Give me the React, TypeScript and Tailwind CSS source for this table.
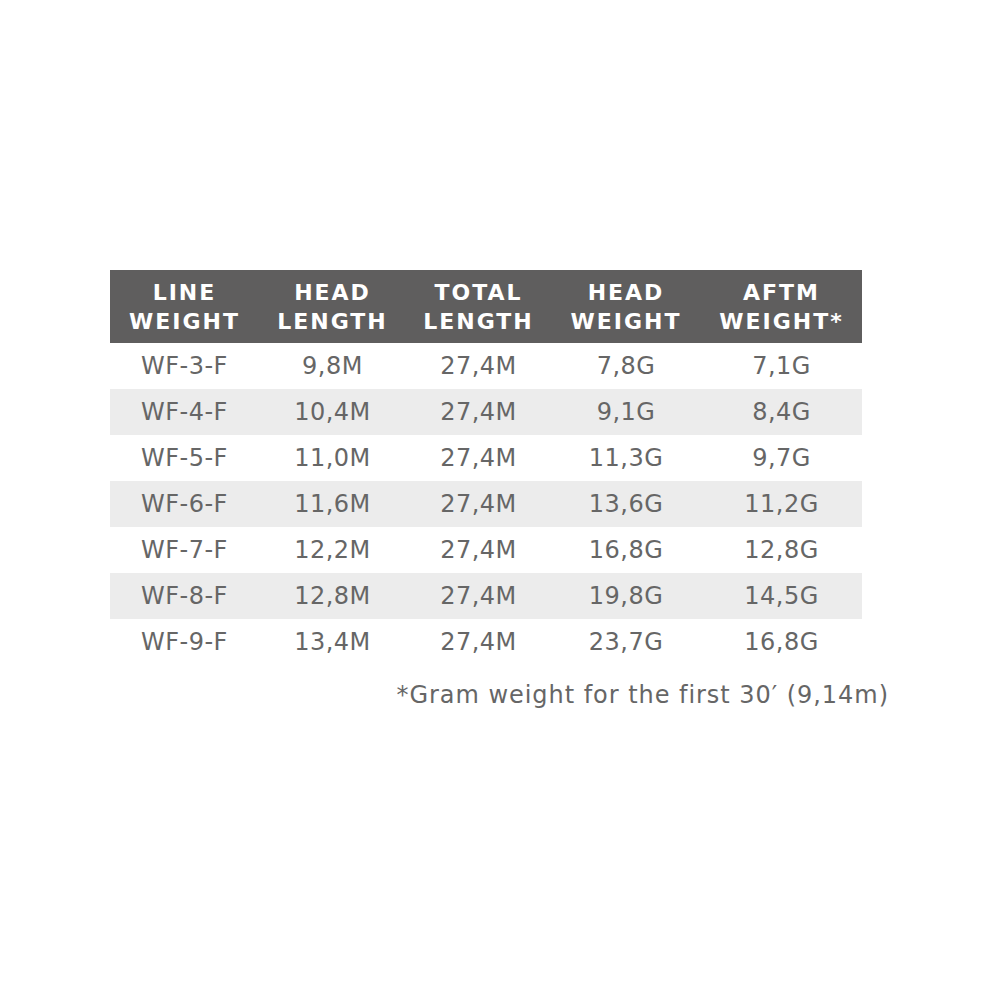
const headers = [
  ["LINE", "WEIGHT"],
  ["HEAD", "LENGTH"],
  ["TOTAL", "LENGTH"],
  ["HEAD", "WEIGHT"],
  ["AFTM", "WEIGHT*"],
];

const rows = [
  ["WF-3-F", "9,8M", "27,4M", "7,8G", "7,1G"],
  ["WF-4-F", "10,4M", "27,4M", "9,1G", "8,4G"],
  ["WF-5-F", "11,0M", "27,4M", "11,3G", "9,7G"],
  ["WF-6-F", "11,6M", "27,4M", "13,6G", "11,2G"],
  ["WF-7-F", "12,2M", "27,4M", "16,8G", "12,8G"],
  ["WF-8-F", "12,8M", "27,4M", "19,8G", "14,5G"],
  ["WF-9-F", "13,4M", "27,4M", "23,7G", "16,8G"],
];

const widths = ["w-[149px]", "w-[147px]", "w-[145px]", "w-[150px]", "w-[161px]"];

export default function App() {
  return (
    <div className="min-h-[1000px] w-[1000px] bg-white pl-[110px] pt-[270px] font-['DejaVu_Sans',Verdana,sans-serif]">
      <div className="w-[752px]">
        <div className="flex h-[73px] items-center bg-[#5f5e5e]">
          {headers.map((h, i) => (
            <div
              key={i}
              className={`${widths[i]} text-center text-[22px] font-bold leading-[29px] tracking-[0.09em] text-white`}
            >
              <div>{h[0]}</div>
              <div>{h[1]}</div>
            </div>
          ))}
        </div>
        {rows.map((r, ri) => (
          <div key={ri} className={`flex h-[46px] items-center ${ri % 2 === 1 ? "bg-[#ececec]" : "bg-white"}`}>
            {r.map((c, ci) => (
              <div key={ci} className={`${widths[ci]} text-center text-[24px] tracking-[0.02em] text-[#666666]`}>
                {c}
              </div>
            ))}
          </div>
        ))}
      </div>
      <div className="mt-[12px] w-[779px] text-right text-[24px] tracking-[0.04em] text-[#666666]">
        *Gram weight for the first 30′ (9,14m)
      </div>
    </div>
  );
}
